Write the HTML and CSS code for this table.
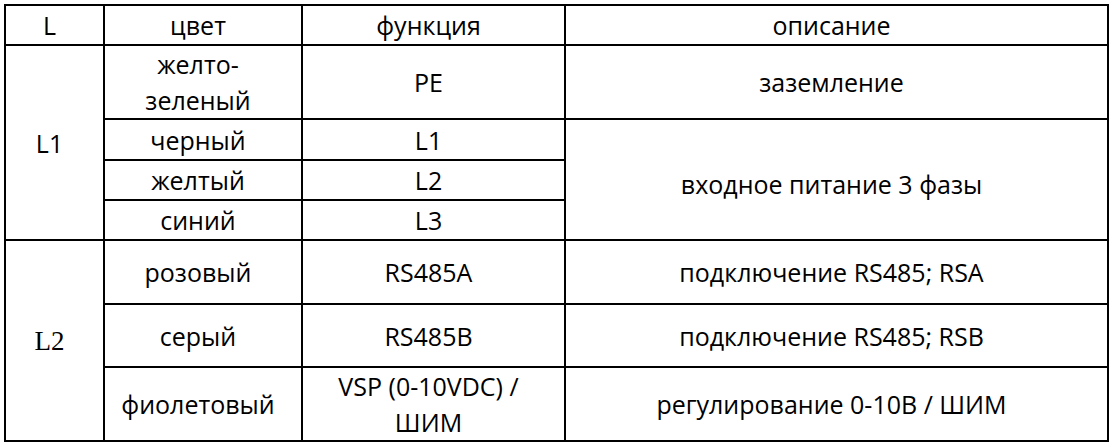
FILE: index.html
```html
<!DOCTYPE html>
<html lang="ru">
<head>
<meta charset="utf-8">
<title>Провода</title>
<link rel="stylesheet" href="styles.css">
</head>
<body>
<table class="wires">
  <colgroup>
    <col class="c-l">
    <col class="c-color">
    <col class="c-func">
    <col class="c-desc">
  </colgroup>
  <thead>
    <tr class="h-head">
      <th>L</th>
      <th>цвет</th>
      <th>функция</th>
      <th>описание</th>
    </tr>
  </thead>
  <tbody>
    <tr class="h-72">
      <td rowspan="4">L1</td>
      <td>желто-<br>зеленый</td>
      <td>PE</td>
      <td>заземление</td>
    </tr>
    <tr class="h-41">
      <td>черный</td>
      <td>L1</td>
      <td rowspan="3" class="shift">входное питание 3 фазы</td>
    </tr>
    <tr class="h-40">
      <td>желтый</td>
      <td>L2</td>
    </tr>
    <tr class="h-40">
      <td>синий</td>
      <td>L3</td>
    </tr>
    <tr class="h-64">
      <td rowspan="3" class="serif">L2</td>
      <td>розовый</td>
      <td>RS485A</td>
      <td>подключение RS485; RSA</td>
    </tr>
    <tr class="h-63">
      <td>серый</td>
      <td>RS485B</td>
      <td>подключение RS485; RSB</td>
    </tr>
    <tr class="h-72">
      <td>фиолетовый</td>
      <td>VSP (0-10VDC) /<br>ШИМ</td>
      <td>регулирование 0-10В / ШИМ</td>
    </tr>
  </tbody>
</table>
</body>
</html>
```
FILE: styles.css
```css
html, body {
  margin: 0;
  padding: 0;
  background: #fff;
}

.wires {
  margin: 4px 0 0 4px;
  border-collapse: collapse;
  table-layout: fixed;
  width: 1105px;
  font-family: "Open Sans", "Noto Sans", sans-serif;
  font-size: 25px;
  font-weight: 500;
  line-height: 36px;
  color: #000;
}

.c-l { width: 99px; }
.c-color { width: 198px; }
.c-func { width: 263px; }
.c-desc { width: 543px; }

.wires th,
.wires td {
  border: 2px solid #000;
  padding: 0 10px 0 0;
  text-align: center;
  vertical-align: middle;
  font-weight: 500;
}

.h-head th { height: 38px; }
.h-72 td { height: 70px; }
.h-41 td { height: 39px; }
.h-40 td { height: 38px; }
.h-64 td { height: 62px; }
.h-63 td { height: 61px; }

.wires td.shift { padding-top: 8px; }

.wires td.serif {
  font-family: "Liberation Serif", "Times New Roman", serif;
  font-size: 27px;
  font-weight: normal;
  padding-top: 0;
}
```
